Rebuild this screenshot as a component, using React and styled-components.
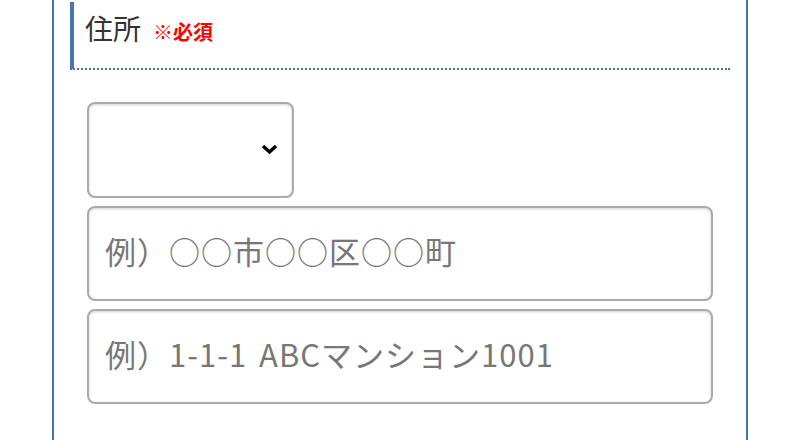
import React from "react";
import styled, { createGlobalStyle } from "styled-components";

const GlobalStyle = createGlobalStyle`
  html, body {
    margin: 0;
    padding: 0;
    background: #fff;
    overflow: hidden;
  }
  body {
    font-family: "Noto Sans CJK JP", "Noto Sans", sans-serif;
  }
`;

const Page = styled.div`
  height: 440px;
  display: flex;
  justify-content: center;
`;

const Panel = styled.section`
  box-sizing: border-box;
  width: 696px;
  border-left: 2px solid #4a74ad;
  border-right: 2px solid #4a74ad;
  padding: 2px 16px 0;
`;

const Heading = styled.h2`
  box-sizing: border-box;
  margin: 0;
  height: 68px;
  border-left: 4px solid #4a74ad;
  border-bottom: 2px dotted #4a74ad;
  padding: 12px 0 0 11px;
  display: flex;
  align-items: baseline;
  gap: 12px;
  font-weight: normal;
  font-size: 28px;
  color: #333;
  line-height: 1;
`;

const Required = styled.span`
  color: #f00;
  font-size: 20px;
  font-weight: bold;
`;

const Fields = styled.div`
  padding: 32px 17px 0;
  display: flex;
  flex-direction: column;
  align-items: flex-start;
  gap: 8px;
`;

const SelectWrap = styled.div`
  position: relative;
  width: 207px;
  height: 96px;
`;

const Select = styled.select`
  display: block;
  appearance: none;
  width: 100%;
  height: 100%;
  box-sizing: border-box;
  border: 2px solid #aaa;
  border-radius: 8px;
  background: #fff;
  box-shadow: inset 0 1px 3px rgba(0, 0, 0, 0.18);
  font-size: 24px;
  font-family: inherit;
  outline: none;
`;

const Chevron = styled.svg`
  position: absolute;
  right: 16px;
  top: 41px;
  pointer-events: none;
`;

const Input = styled.input`
  display: block;
  width: 626px;
  height: 95px;
  box-sizing: border-box;
  border: 2px solid #aaa;
  border-radius: 8px;
  box-shadow: inset 0 1px 3px rgba(0, 0, 0, 0.18);
  padding: 0 16px 6px;
  font-size: 31px;
  letter-spacing: 1px;
  word-spacing: 4px;
  font-family: "Noto Sans CJK JP", "Noto Sans", sans-serif;
  color: #333;
  outline: none;

  &::placeholder {
    color: #777;
  }
`;

export default function App() {
  return (
    <Page>
      <GlobalStyle />
      <Panel>
        <Heading>
          住所<Required>※必須</Required>
        </Heading>
        <Fields>
          <SelectWrap>
            <Select defaultValue="">
              <option value=""></option>
            </Select>
            <Chevron width="17" height="12" viewBox="0 0 17 12">
              <path d="M2 3 L8.5 9 L15 3" fill="none" stroke="#000" strokeWidth="3.4" />
            </Chevron>
          </SelectWrap>
          <Input placeholder="例）○○市○○区○○町" />
          <Input placeholder="例）1-1-1 ABCマンション1001" />
        </Fields>
      </Panel>
    </Page>
  );
}
